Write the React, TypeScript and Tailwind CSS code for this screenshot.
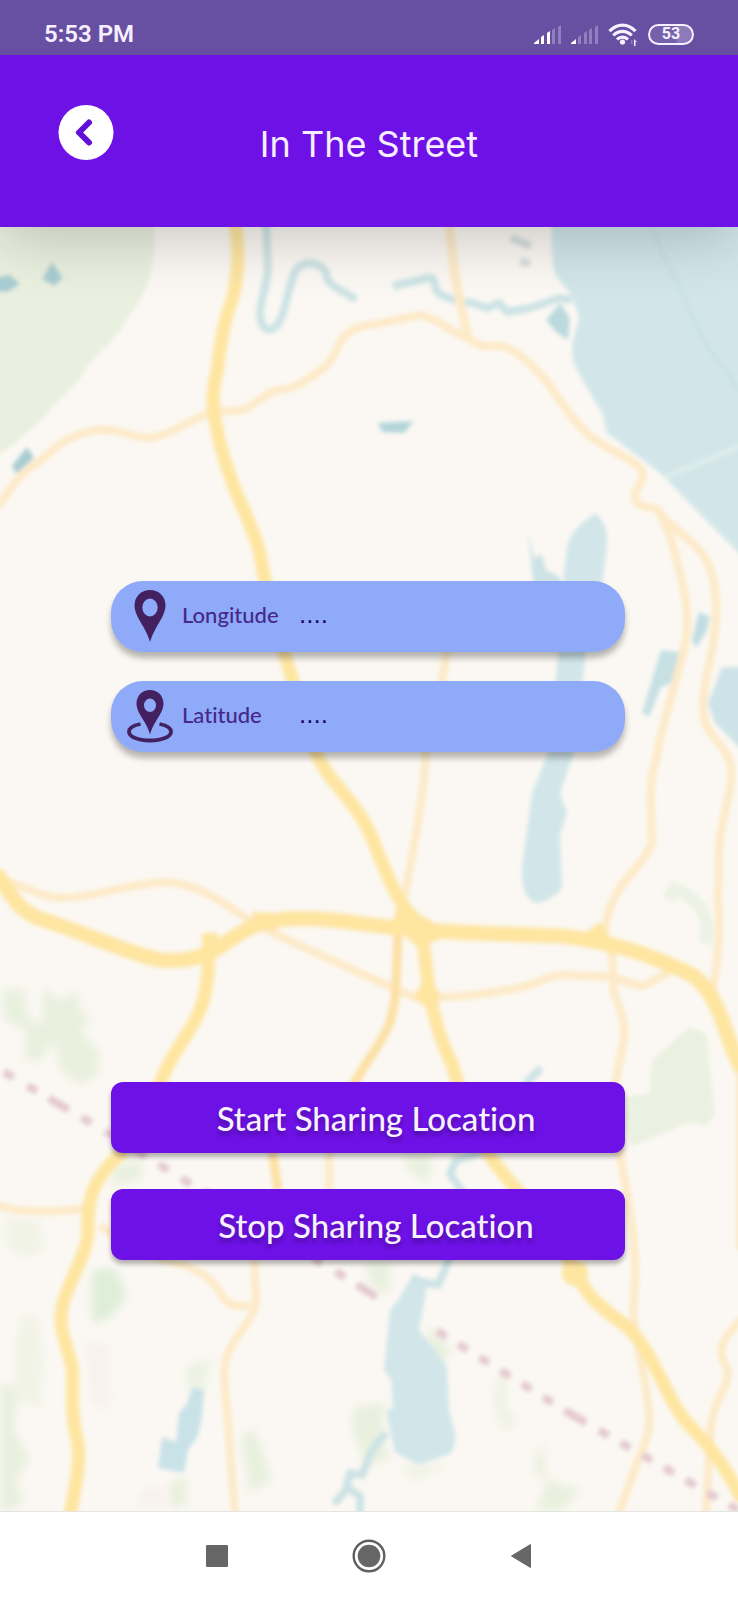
import type { ReactNode } from "react";

function SignalBars({ active }: { active: number }) {
  const bars = [
    "M0 19 L0 18 L5 14 L5 19 Z",
    "M7 19 V12 L10 10 V19 Z",
    "M13 19 V8 L16 6 V19 Z",
    "M18 19 V5 L21 3 V19 Z",
    "M24 19 V2 L27 0 V19 Z",
  ];
  return (
    <svg viewBox="0 0 27 19" className="h-[19px] w-[27px]" aria-hidden="true">
      {bars.map((d, i) => (
        <path key={d} d={d} fill="#ffffff" fillOpacity={i < active ? 1 : 0.28} />
      ))}
    </svg>
  );
}

function WifiIcon() {
  return (
    <svg viewBox="0 0 30 23" className="h-[23px] w-[30px]" aria-hidden="true" fill="none">
      <g stroke="#f6efff" strokeWidth="3.2">
        <path d="M1.5 8.2 C9 0 20 0 27.500 8.200" />
        <path d="M5.300 12.500 C10.500 7 18.500 7 23.700 12.500" />
        <path d="M9 16.500 C12 13.400 17 13.400 20 16.500" />
      </g>
      <circle cx="14.500" cy="19" r="2.600" fill="#f6efff" />
      <path d="M26 16 L29 19 H27.500 V23 H26 Z" fill="#f6efff" />
      <path d="M23 17 H24.500 V21 H23 Z" fill="#f6efff" fillOpacity="0.3" />
    </svg>
  );
}

function StatusBar() {
  return (
    <div className="relative z-20 flex h-[55px] items-center justify-between bg-[#674fa2] pr-11 pl-11 pt-[13px] font-['Roboto',sans-serif] text-[#f6efff]">
      <span className="text-2xl leading-6 font-semibold">5:53 PM</span>
      <div className="flex items-center gap-[10px]">
        <SignalBars active={3} />
        <SignalBars active={1} />
        <WifiIcon />
        <span className="flex h-[21px] w-[46px] items-center justify-center rounded-full border-2 border-[#f6efff] bg-linear-to-r from-white/10 from-65% to-white/25 to-65% text-base leading-4 font-bold">
          53
        </span>
      </div>
    </div>
  );
}

function Header() {
  return (
    <header className="relative z-10 grid h-[172px] grid-cols-[1fr_auto_1fr] items-start bg-[#6e11e6] px-[58px] pt-[50px] shadow-[0_12px_60px_rgba(0,0,0,0.2)]">
      <button type="button" aria-label="Back" className="size-14">
        <svg viewBox="0 0 56 56" className="size-14" fill="none" aria-hidden="true">
          <circle cx="28" cy="27.500" r="27.500" fill="#ffffff" />
          <path
            d="M31 17.500 L21 27.500 L31 37.500"
            stroke="#6210d6"
            strokeWidth="6"
            strokeLinecap="round"
            strokeLinejoin="round"
          />
        </svg>
      </button>
      <h1 className="mt-3 font-['Inter',sans-serif] text-4xl leading-[54px] font-normal text-[#f7eeff]">
        In The Street
      </h1>
    </header>
  );
}

function MapBackdrop() {
  return (
    <svg
      viewBox="0 227 738 1284"
      preserveAspectRatio="xMidYMin slice"
      className="h-0 min-h-full w-full [grid-area:1/1]"
      aria-hidden="true"
      fill="none"
    >
      <defs>
        <filter id="soft" x="-5%" y="-5%" width="110%" height="110%">
          <feGaussianBlur stdDeviation="2.2" />
        </filter>
        <filter id="haze" x="-20%" y="-20%" width="140%" height="140%">
          <feGaussianBlur stdDeviation="5" />
        </filter>
      </defs>
      <rect x="0" y="227" width="738" height="1284" fill="#fbf8f3" />

      <g fill="#e9f0de" filter="url(#haze)">
        <path d="M2 990 L24 988 L28 1018 L42 1026 L44 986 L60 1000 L78 990 L80 1010 L92 1020 L80 1030 L100 1052 L98 1075 L80 1085 L60 1070 L54 1040 L40 1062 L24 1060 L26 1030 L4 1020 Z" />
        <path d="M402 1155 H432 L428 1184 L408 1170 Z" />
        <path d="M112 1168 L140 1158 L142 1180 L112 1186 Z" />
        <path d="M92 1270 L115 1268 L127 1295 L112 1316 L92 1325 Z" fill="#dfeed8" />
        <path d="M363 1262 H390 V1295 L372 1288 Z" />
        <path d="M6 1215 L40 1222 L44 1250 L20 1258 L6 1244 Z" fillOpacity="0.6" />
        <path d="M22 1318 L36 1312 L44 1360 L40 1408 L18 1400 L14 1350 Z" fillOpacity="0.6" />
        <path d="M0 1382 L18 1390 L14 1430 L30 1460 L16 1480 L24 1500 L14 1511 H0 Z" />
        <path d="M186 1366 L212 1358 L202 1395 L188 1392 Z" fillOpacity="0.8" />
        <path d="M240 1435 L256 1430 L272 1480 L250 1494 Z" />
        <path d="M352 1408 L384 1402 L384 1440 L390 1460 L366 1466 L352 1430 Z" />
        <path d="M430 1325 L452 1350 L440 1368 L426 1345 Z" />
        <path d="M498 1372 L508 1376 L506 1405 L518 1424 L504 1432 L492 1405 Z" fillOpacity="0.7" />
        <path d="M544 1440 L546 1480 L582 1490 L560 1511 H536 L546 1485 L532 1466 Z" />
        <path d="M170 1480 L188 1478 L186 1506 L168 1508 Z" />
        <path d="M400 1466 L450 1462 L416 1482 Z" fillOpacity="0.6" />
      </g>
      <g fill="#f8f2ec" filter="url(#haze)">
        <path d="M84 1340 L110 1345 L112 1412 L90 1405 Z" />
        <path d="M138 1490 L166 1485 L164 1508 L136 1508 Z" />
      </g>

      <g filter="url(#soft)">
        <path d="M-14 210 H155 C155 250 154 262 151 272 C146 294 138 302 127 320 C112 346 98 350 85 370 C72 392 62 396 47 414 C30 432 18 440 -14 466 Z" fill="#eaf0df" />
        <path d="M689 1027 L706 1033 L715 1113 L708 1126 L690 1122 L631 1147 L624 1120 L626 1097 L649 1093 L652 1060 Z" fill="#ebf1e1" />
        <path d="M668 900 L674 888 C690 896 712 906 706 944" stroke="#edf2e5" strokeWidth="13" />

        <g fill="#d2e6e9">
          <path d="M551 210 C552 250 551 262 556 276 L572 296 L579 318 L572 345 L573 362 L584 383 L602 413 L607 433 L659 472 L696 510 L752 566 V210 Z" />
          <path d="M595 513 C604 520 608 530 607 545 L602 585 L586 653 L574 753 L560 793 L567 813 L560 835 L562 888 C556 896 546 902 536 903 C526 900 521 888 522 867 L532 793 L548 753 L558 653 L562 590 L567 547 C572 530 580 524 595 513 Z" />
          <path d="M528 530 L534 558 L542 554 L546 570 L560 577 V590 H534 Z" fill="#cde3e6" />
          <path d="M661 650 L680 652 L673 683 L661 687 L649 717 L642 713 Z" fill="#c6e0e4" />
          <path d="M699 612 L710 617 L706 632 L696 648 L692 640 Z" fill="#c0dde1" />
          <path d="M722 667 H752 V760 L715 723 L708 703 Z" fill="#cde3e8" />
          <path d="M414 1273 L426 1282 L426 1293 L419 1330 L433 1347 L447 1367 L449 1410 L456 1437 L452 1453 L419 1465 L395 1453 L386 1412 L393 1407 L391 1380 L384 1370 L390 1310 L400 1297 Z" />
          <path d="M193 1387 L204 1390 L202 1415 L198 1436 L188 1450 L184 1473 L158 1468 L162 1437 L176 1442 L179 1413 L186 1405 Z" fill="#c9e2e8" />
          <path d="M560 303 L546 320 L556 332 L568 340 L570 318 Z" fill="#bcd9de" />
          <path d="M378 423 L414 421 L404 433 L382 432 Z" fill="#b4d5da" />
          <path d="M52 262 L63 278 L54 286 L42 279 Z" fill="#a8cdd2" />
          <path d="M-4 277 L10 275 L20 284 L8 292 H-4 Z" fill="#a8cdd2" />
          <path d="M27 447 L34 458 L16 474 L12 466 Z" fill="#a8cdd2" />
        </g>
        <path d="M652 227 C662 260 684 290 694 320 C706 350 724 366 740 392" stroke="#bdd7db" strokeWidth="1.500" />
        <path d="M664 478 L740 446" stroke="#e6efed" strokeWidth="3" />
        <g stroke="#cde3e5" strokeWidth="8" strokeLinejoin="round">
          <path d="M266 222 L268 270 C266 290 260 300 260 314 C261 334 275 334 281 318 C287 302 290 284 294 274 C300 260 318 260 326 272 C326 288 342 288 356 300" />
          <path d="M393 286 L428 278 C438 276 432 290 440 294 C450 300 460 302 472 303 L487 308 L499 303 L507 312 L530 308 L560 298 L572 300" />
          <path d="M386 1433 L372 1450 L362 1475 L350 1473 L346 1490 L334 1504" />
          <path d="M346 1487 L360 1496 V1514" />
          <path d="M412 1280 L438 1285 L448 1262 L458 1236" />
          <path d="M484 1152 L456 1160 L450 1174 L464 1194" />
          <path d="M541 1068 L525 1084" />
        </g>
        <path d="M511 238 L531 246 M520 262 L530 263" stroke="#d6dfdd" strokeWidth="8" />

        <g stroke="#fdeac8" strokeWidth="8" strokeLinejoin="round">
          <path d="M-3 507 C12 488 18 476 30 468 C46 458 58 442 76 436 C88 431 94 430 104 430 C122 430 136 438 151 438 C172 434 190 420 207 414 C222 408 234 414 248 408 C260 400 268 392 278 390 C292 390 304 382 315 374 C336 362 336 346 344 336 C352 328 364 325 376 324 L421 315 C434 318 444 326 455 332 L482 346 L503 346 C520 352 532 366 544 378 C560 400 574 422 590 436 C608 450 630 458 640 468 C648 478 636 486 635 494 C634 506 646 508 656 508 C664 520 672 524 680 533 C698 546 708 558 713 578 C718 600 716 614 715 630 C712 660 700 690 704 718 C708 738 726 744 731 766 C734 790 720 820 719 850 L718 900 C721 930 718 960 713 990" />
          <path d="M658 510 C668 528 674 546 678 566 C684 588 690 610 686 640 C678 680 662 720 656 760 C648 784 651 804 652 842 C646 862 626 874 616 895 C608 908 606 920 605 935 L612 955 L614 993 C620 1010 626 1020 624 1040 L614 1090 L621 1160 C628 1200 640 1250 633 1310 C636 1350 650 1390 649 1426 C646 1450 636 1460 634 1472 L618 1514" />
          <path d="M449 222 L454 270 C458 296 464 318 468 338" strokeWidth="9" />
          <path d="M447 640 C446 680 430 720 426 753 C424 790 418 820 414 845 L404 900" />
          <path d="M-2 878 C20 884 40 898 64 898 C100 896 130 884 165 882 C200 884 222 902 249 920 C284 940 320 954 353 970 L416 998 C450 998 490 994 522 987 C540 984 548 974 566 975 L612 977 C626 980 638 988 646 985 L676 968" />
          <path d="M329 1150 V1190" />
          <path d="M254 1255 L256 1303 C252 1322 238 1332 231 1347 C222 1362 224 1380 226 1400 C230 1440 231 1470 235 1514" />
          <path d="M100 1225 C124 1246 150 1256 180 1264 C204 1272 212 1280 220 1292 C228 1308 236 1306 250 1306" />
          <path d="M-2 1205 C20 1214 60 1212 87 1208" />
          <path d="M742 1318 L727 1336 C718 1350 720 1356 728 1370 C728 1390 714 1400 711 1424 L706 1514" />
          <path d="M740 1060 V1250" />
        </g>
        <g stroke="#fce0a5" strokeWidth="9" strokeLinejoin="round">
          <path d="M398 935 C396 970 398 1000 389 1025 C378 1050 362 1066 352 1088" />
          <path d="M272 1150 L278 1190" />
        </g>
        <g stroke="#fee5a0" strokeWidth="13" strokeLinejoin="round">
          <path d="M235 220 C240 254 238 280 232 300 C222 326 220 350 217 372 C212 392 212 410 216 424 C220 450 226 464 232 482 C243 510 254 530 259 550 L266 585 C276 630 290 670 300 706 C308 740 320 766 336 784 C354 806 366 820 376 848 C388 876 394 896 412 916 C424 930 424 950 426 966 C430 1010 440 1040 452 1064 L466 1110 C480 1150 506 1178 530 1204 C560 1240 570 1266 588 1293 C606 1316 626 1320 640 1342 C662 1372 668 1404 692 1428 C714 1450 730 1474 742 1500" />
          <path d="M-4 872 C16 906 26 916 50 922 C92 936 130 954 160 960 C186 962 204 958 224 944 C244 930 256 922 286 919 C330 916 366 926 400 928 C460 934 510 934 560 936 C620 942 662 960 694 976 C722 1000 722 1030 742 1070" strokeWidth="15" />
          <path d="M209 950 C208 990 204 1006 192 1026 C176 1052 164 1068 158 1090 C144 1130 130 1146 112 1162 C92 1184 88 1200 88 1224 C90 1250 72 1274 64 1300 C56 1324 66 1342 72 1366 C74 1390 70 1400 75 1430 C84 1458 74 1490 70 1516" />
        </g>
        <g fill="#fee5a0">
          <path d="M398 902 L440 926 V940 L416 946 L392 925 Z" />
          <path d="M201 934 L216 932 L224 950 L206 966 Z" />
          <path d="M252 912 L290 914 L276 930 H254 Z" />
          <path d="M600 922 L610 938 L606 950 L584 934 Z" />
          <path d="M424 980 L440 992 L438 1006 L424 1006 L414 996 Z" />
          <circle cx="575" cy="1273" r="13" />
        </g>

        <path d="M4 1072 L110 1134 L184 1180 L343 1276 L388 1304" stroke="#e4cad1" strokeWidth="8" strokeDasharray="11 16 11 14 23 15" />
        <path d="M437 1331 L569 1413 L738 1510" stroke="#e4cad1" strokeWidth="8" strokeDasharray="11 14 11 14 11 14 11 14 11 14 11 14 25 15" />
      </g>
    </svg>
  );
}

function PinIcon() {
  return (
    <svg viewBox="0 0 46 54" className="h-[54px] w-[46px] shrink-0" aria-hidden="true">
      <path
        fillRule="evenodd"
        fill="#43205f"
        d="M23 0 C14 0 7.500 6.500 7.500 15.500 C7.500 23 13 31 17 38 C19.500 42.500 21.500 47 23 52 C24.500 47 26.500 42.500 29 38 C33 31 38.500 23 38.500 15.500 C38.500 6.500 32 0 23 0 Z M23 8.500 A7.700 9 0 1 1 23 26.500 A7.700 9 0 1 1 23 8.500 Z"
      />
    </svg>
  );
}

function PinOrbitIcon() {
  return (
    <svg viewBox="0 0 46 54" className="h-[54px] w-[46px] shrink-0" aria-hidden="true" fill="none">
      <path
        d="M13.500 34 C6 35.500 2 38 2 41.700 C2 47 11 50.500 23 50.500 S44 47 44 41.700 C44 38 40 35.500 32.500 34"
        stroke="#43205f"
        strokeWidth="3.800"
      />
      <path
        fillRule="evenodd"
        fill="#43205f"
        d="M23 0 C15.300 0 9.500 5.800 9.500 13.500 C9.500 20 14 26 17.500 32 C20 36.200 21.800 40 23 44.500 C24.200 40 26 36.200 28.500 32 C32 26 36.500 20 36.500 13.500 C36.500 5.800 30.700 0 23 0 Z M23 8.500 A6 6.800 0 1 1 23 22.100 A6 6.800 0 1 1 23 8.500 Z"
      />
    </svg>
  );
}

function CoordinateField({ id, label, icon }: { id: string; label: string; icon: ReactNode }) {
  return (
    <div className="flex h-[71px] items-center gap-[9px] rounded-[32px] bg-[#8faaf8] pr-8 pl-4 shadow-[0_6px_6px_rgba(0,0,0,0.28)]">
      {icon}
      <div className="flex min-w-0 flex-1 items-baseline pb-1">
        <label
          htmlFor={id}
          className="w-[117px] shrink-0 font-['Lato',sans-serif] text-[22px] leading-8 font-medium text-[#45288a] [font-variant-ligatures:none]"
        >
          {label}
        </label>
        <input
          id={id}
          type="text"
          readOnly
          value="...."
          className="w-full min-w-0 bg-transparent font-['Liberation_Sans',sans-serif] text-[26px] leading-8 text-[#1b0a63] outline-none"
        />
      </div>
    </div>
  );
}

function ActionButton({ children }: { children: ReactNode }) {
  return (
    <button
      type="button"
      className="h-[71px] w-full rounded-xl bg-[#6e11e6] pl-4 font-['Lato',sans-serif] text-[33px] leading-10 font-medium text-[#f7f0ff] [font-variant-ligatures:none] shadow-[0_4px_5px_rgba(0,0,0,0.3)] text-shadow-[0_4px_4px_rgba(0,0,0,0.3)]"
    >
      {children}
    </button>
  );
}

function NavigationBar() {
  return (
    <nav className="flex h-[89px] items-center justify-center gap-24 border-t border-[#e4e4e0] bg-white">
      <button type="button" aria-label="Recent apps" className="flex size-14 items-center justify-center">
        <svg viewBox="0 0 22 22" className="size-[22px]" aria-hidden="true">
          <rect width="22" height="22" rx="1" fill="#666666" />
        </svg>
      </button>
      <button type="button" aria-label="Home" className="flex size-14 items-center justify-center">
        <svg viewBox="0 0 34 34" className="size-[34px]" aria-hidden="true">
          <circle cx="17" cy="17" r="15.300" fill="none" stroke="#606060" strokeWidth="2.400" />
          <circle cx="17" cy="17" r="11.300" fill="#666666" />
        </svg>
      </button>
      <button type="button" aria-label="Back" className="flex size-14 items-center justify-center">
        <svg viewBox="0 0 22 26" className="h-[26px] w-[22px]" aria-hidden="true">
          <path d="M20.500 1.500 V24.500 L1.500 13 Z" fill="#666666" stroke="#666666" strokeLinejoin="round" />
        </svg>
      </button>
    </nav>
  );
}

export default function App() {
  return (
    <div className="flex min-h-screen flex-col bg-[#fbf8f3]">
      <StatusBar />
      <Header />
      <main className="grid flex-1 overflow-hidden">
        <MapBackdrop />
        <div className="z-1 flex flex-col gap-[330px] pr-[113px] pl-[111px] pt-[354px] pb-[251px] [grid-area:1/1]">
          <section className="flex flex-col gap-[29px]">
            <CoordinateField id="longitude" label="Longitude" icon={<PinIcon />} />
            <CoordinateField id="latitude" label="Latitude" icon={<PinOrbitIcon />} />
          </section>
          <section className="flex flex-col gap-9">
            <ActionButton>Start Sharing Location</ActionButton>
            <ActionButton>Stop Sharing Location</ActionButton>
          </section>
        </div>
      </main>
      <NavigationBar />
    </div>
  );
}
